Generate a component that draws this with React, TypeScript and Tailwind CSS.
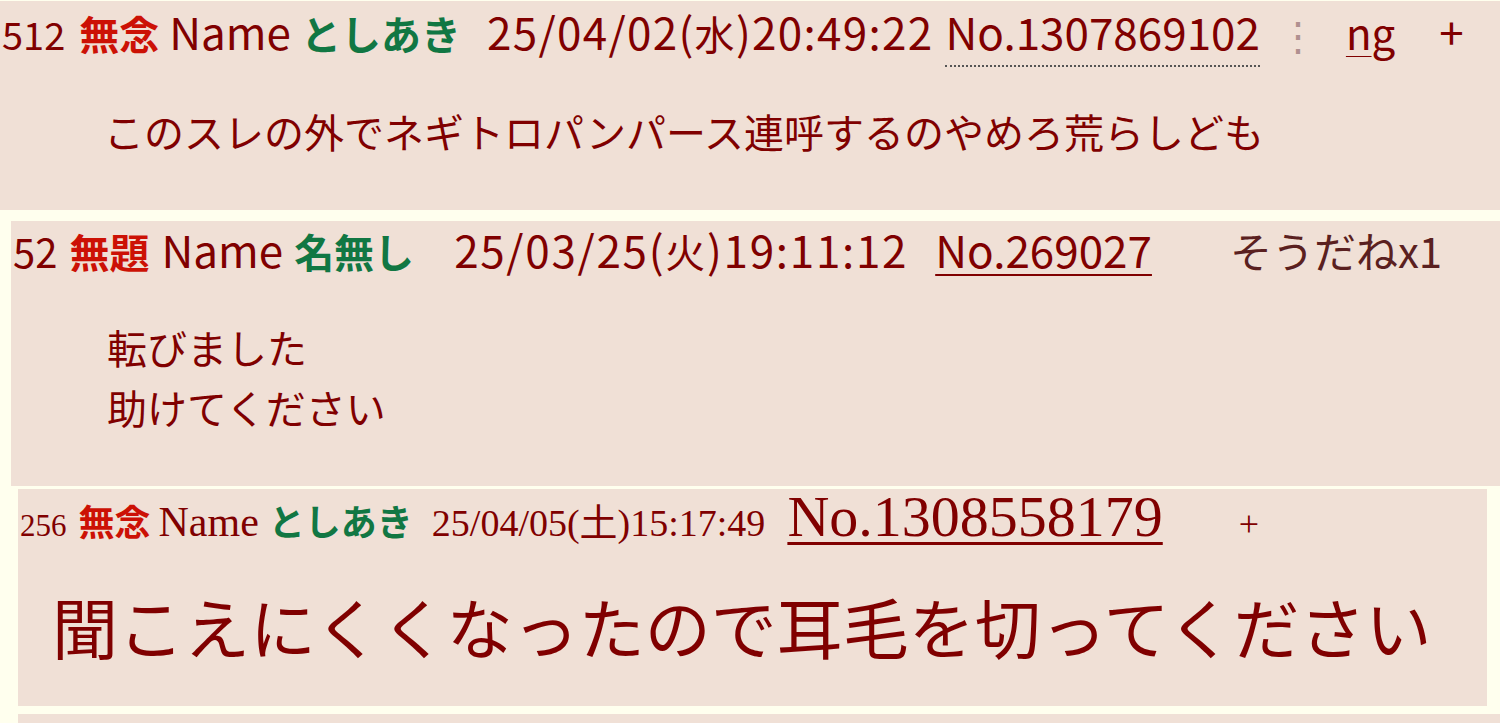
import React from "react";

const SANS = "font-['Noto_Sans_CJK_JP','Noto_Sans',sans-serif]";
const SERIF = "font-['Liberation_Serif','Noto_Sans_CJK_JP',serif]";

export default function App() {
  return (
    <div className="w-[1500px] h-[723px] overflow-hidden bg-[#ffffee] pt-px text-[#800000]">
      {/* Post 1 */}
      <div className={`h-[209px] bg-[#f0e0d6] ${SANS}`}>
        <div className="flex items-baseline h-[70px] text-[44px] leading-[56px] whitespace-nowrap">
          <span className="text-[38px] ml-[2px]">512</span>
          <span className="ml-[14px] text-[40px] font-bold text-[#cc1105]">無念</span>
          <span className="ml-[10px]">Name</span>
          <span className="ml-[10px] text-[40px] font-bold text-[#117743]">としあき</span>
          <span className="ml-[26px] tracking-[1.3px]">25/04/02(<span className="text-[40px]">水</span>)20:49:22</span>
          <span className="ml-[12px] border-b-2 border-dotted border-[#555] leading-[60px] pb-[4px]">No.1307869102</span>
          <span className="ml-[18px] text-[40px] text-[#b09090]">⋮</span>
          <span className="ml-[28px] text-[42px]"><span className="underline underline-offset-[6px] decoration-1">n</span>g</span>
          <span className="ml-[44px]">+</span>
        </div>
        <div className="pl-[104px] pt-[32px] text-[40px] leading-[56px]">
          このスレの外でネギトロパンパース連呼するのやめろ荒らしども
        </div>
      </div>

      {/* Post 2 */}
      <div className="mt-[11px] ml-[11px] h-[265px] bg-[#f0e0d6]">
        <div className={`flex items-baseline h-[64px] text-[44px] leading-[56px] whitespace-nowrap ${SANS}`}>
          <span className="ml-[2px] text-[40px]">52</span>
          <span className="ml-[12px] text-[40px] font-bold text-[#cc1105]">無題</span>
          <span className="ml-[12px]">Name</span>
          <span className="ml-[11px] text-[40px] font-bold text-[#117743]">名無し</span>
          <span className="ml-[40px] tracking-[1.7px]">25/03/25(<span className="text-[40px]">火</span>)19:11:12</span>
          <span className="ml-[27px] underline underline-offset-[6px] decoration-2">No.269027</span>
          <span className="ml-[78px] text-[42px] text-[#5a2020]">そうだねx1</span>
        </div>
        <div className={`pl-[96px] pt-[32px] text-[40px] leading-[60px] ${SANS}`}>
          <div>転びました</div>
          <div>助けてください</div>
        </div>
      </div>

      {/* Post 3 */}
      <div className="mt-[3px] ml-[18px] w-[1469px] h-[217px] bg-[#f0e0d6]">
        <div className={`flex items-baseline h-[58px] whitespace-nowrap ${SERIF} text-[38px] leading-[56px]`}>
          <span className="ml-[2px] text-[31px]">256</span>
          <span className={`ml-[12px] ${SANS} text-[36px] font-bold text-[#cc1105]`}>無念</span>
          <span className="ml-[8px] text-[42px]">Name</span>
          <span className={`ml-[10px] ${SANS} text-[36px] font-bold text-[#117743]`}>としあき</span>
          <span className="ml-[19px]">25/04/05(土)15:17:49</span>
          <span className="ml-[22px] text-[58px] underline underline-offset-[6px] decoration-[3px]">No.1308558179</span>
          <span className="ml-[76px] text-[36px]">+</span>
        </div>
        <div className={`pl-[34px] pt-[34px] text-[66px] leading-[88px] whitespace-nowrap ${SANS}`}>
          聞こえにくくなったので耳毛を切ってください
        </div>
      </div>

      {/* next post strip */}
      <div className="mt-[8px] ml-[18px] h-[20px] bg-[#f0e0d6]" />
    </div>
  );
}
